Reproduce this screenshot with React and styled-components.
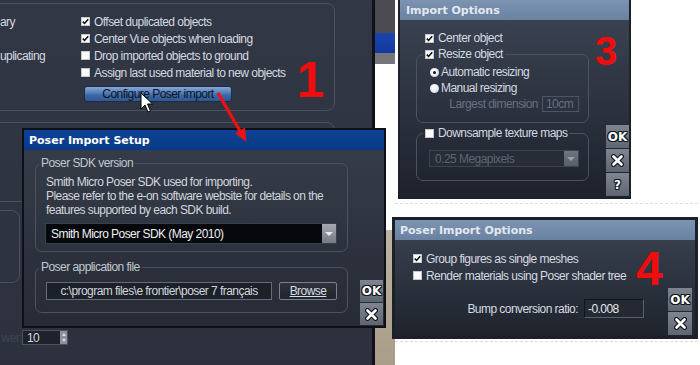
import React from 'react';
import styled, { createGlobalStyle } from 'styled-components';

const GlobalStyle = createGlobalStyle`
  html, body { margin: 0; padding: 0; background: #ffffff; }
  #root { width: 700px; height: 365px; overflow: hidden; }
`;

const uiFont = `"Liberation Sans", Arial, sans-serif`;
const titleFont = `"DejaVu Sans", Verdana, sans-serif`;

const Canvas = styled.div`
  display: flex;
  width: 700px;
  height: 365px;
  overflow: hidden;
  background: #ffffff;
  font-family: ${uiFont};
  font-size: 12px;
  letter-spacing: -0.55px;
  color: #d5d9e0;
`;

// left screenshot : preferences panel with the setup window over it
const VueShot = styled.div`
  position: relative;
  display: flex;
  width: 395px;
  height: 365px;
  flex-shrink: 0;
`;

const MainPanel = styled.div`
  width: 375px;
  height: 365px;
  box-sizing: border-box;
  padding-top: 3px;
  display: flex;
  flex-direction: column;
  background: linear-gradient(180deg, #313744 0%, #2c313d 100%);
  border-right: 3px solid #0f1319;
  overflow: hidden;
`;

const PrefsGroup = styled.div`
  flex-shrink: 0;
  margin-left: -10px;
  margin-top: ${p => p.$mt || 0}px;
  width: ${p => p.$w}px;
  height: ${p => p.$h}px;
  box-sizing: border-box;
  border: 1px solid #4a5161;
  border-radius: 8px;
`;

const PrefsGrid = styled(PrefsGroup)`
  display: grid;
  grid-template-columns: 80px 1fr;
  grid-template-rows: repeat(4, 17px) 21px;
  align-items: center;
  padding: 9px 0 0 10px;
`;

const CutLabel = styled.div`
  grid-column: 1;
  grid-row: ${p => p.$row};
  margin-left: -1px;
  white-space: nowrap;
`;

const Option = styled.label`
  grid-column: 2;
  grid-row: ${p => p.$row};
  display: flex;
  align-items: center;
  gap: 4px;
  white-space: nowrap;
`;

const ConfigureButton = styled.div`
  grid-column: 2;
  grid-row: 5;
  align-self: end;
  margin-left: 3px;
  width: 148px;
  height: 16px;
  box-sizing: border-box;
  display: flex;
  align-items: center;
  justify-content: center;
  border: 1px solid #1b2d4c;
  border-radius: 3px;
  background: linear-gradient(180deg, #86a8d4 0%, #5d86bd 35%, #3b66a3 62%, #30588f 100%);
  color: #0c1322;
  white-space: nowrap;
`;

const SpinRow = styled.div`
  display: flex;
  align-items: center;
  margin-top: 47px;
  height: 15px;
`;

const SpinLabel = styled.div`
  width: 22px;
  text-align: right;
  color: #3f4554;
  white-space: nowrap;
`;

const Spinbox = styled.div`
  width: 46px;
  height: 15px;
  box-sizing: border-box;
  display: flex;
  align-items: center;
  justify-content: space-between;
  padding-left: 4px;
  border: 1px solid #4c5261;
  background: #1e222a;
`;

const SpinArrows = styled.div`
  width: 7px;
  height: 13px;
  display: flex;
  flex-direction: column;
  align-items: center;
  justify-content: space-around;
  background: #8c929d;
  &::before, &::after {
    content: '';
    border-left: 2.5px solid transparent;
    border-right: 2.5px solid transparent;
  }
  &::before { border-bottom: 3px solid #d9dce1; }
  &::after { border-top: 3px solid #d9dce1; }
`;

const SideStrip = styled.div`
  width: 20px;
  display: flex;
  flex-direction: column;
`;

const StripBlock = styled.div`
  flex: ${p => (p.$h ? `0 0 ${p.$h}px` : '1')};
  background: ${p => p.$bg};
`;

// generic window
const Window = styled.div`
  box-sizing: border-box;
  flex-shrink: 0;
  width: ${p => p.$w}px;
  height: ${p => p.$h}px;
  display: flex;
  flex-direction: column;
  border: ${p => p.$border}px solid #0d1016;
`;

const SetupWindow = styled(Window)`
  position: absolute;
  left: 22px;
  top: 128px;
`;

const OptionsWindow = styled(Window)`
  position: relative;
  margin-left: ${p => p.$ml}px;
  border-color: #1b2029;
  border-top-width: ${p => p.$bt}px;
`;

const TitleBar = styled.div`
  height: 20px;
  flex-shrink: 0;
  display: flex;
  align-items: center;
  padding-left: ${p => p.$pl}px;
  font-family: ${titleFont};
  font-weight: bold;
  font-size: 11px;
  letter-spacing: 0;
  white-space: nowrap;
  color: ${p => (p.$tone === 'blue' ? '#ffffff' : '#e3e8ef')};
  background: ${p =>
    p.$tone === 'blue'
      ? 'linear-gradient(180deg, #0d4294 0%, #083a86 100%)'
      : 'linear-gradient(180deg, #7c93b1 0%, #6a82a2 100%)'};
`;

const WindowBody = styled.div`
  flex: 1;
  min-height: 0;
  display: flex;
  background: linear-gradient(180deg, ${p => p.$top} 0%, ${p => p.$bottom} 100%);
`;

const Content = styled.div`
  flex: 1;
  min-width: 0;
  display: flex;
  flex-direction: column;
  align-items: flex-start;
  padding: ${p => p.$pad};
`;

const ButtonStack = styled.div`
  display: flex;
  flex-direction: column;
  gap: 1px;
  align-self: flex-end;
  margin: 0 ${p => p.$mr}px 1px 0;
`;

const SideButton = styled.div`
  width: ${p => p.$w}px;
  height: ${p => p.$h}px;
  display: flex;
  align-items: center;
  justify-content: center;
  background: linear-gradient(180deg, #7e8490 0%, #5f6571 100%);
  font-family: ${titleFont};
  font-weight: bold;
  font-size: 12px;
  letter-spacing: 0;
  color: #ffffff;
  text-shadow: 1px 0 0 #151820, -1px 0 0 #151820, 0 1px 0 #151820, 0 -1px 0 #151820,
    1px 1px 0 #151820, -1px -1px 0 #151820, 1px -1px 0 #151820, -1px 1px 0 #151820;
`;

const Group = styled.fieldset`
  margin: ${p => p.$mt || 0}px 0 0 0;
  width: ${p => p.$w}px;
  min-width: 0;
  box-sizing: border-box;
  padding: ${p => p.$pad};
  border: 1px solid #4b5262;
  border-radius: 7px;
`;

/* legend sits after the fieldset's left padding, so the offset is often negative */
const Legend = styled.legend`
  padding: 0 2px;
  margin-left: ${p => p.$ml}px;
  line-height: 14px;
  color: ${p => (p.$dim ? '#c2c7cf' : '#d5d9e0')};
  white-space: nowrap;
`;

const LegendInner = styled.span`
  display: inline-flex;
  align-items: center;
  gap: 4px;
  height: 14px;
  vertical-align: top;
`;

const NoteText = styled.div`
  line-height: 14px;
  padding-left: 1px;
  color: #d2d6dd;
  white-space: nowrap;
`;

const Dropdown = styled.div`
  margin-top: ${p => p.$mt || 0}px;
  width: ${p => p.$w}px;
  height: ${p => p.$h}px;
  box-sizing: border-box;
  display: flex;
  align-items: stretch;
  border: 1px solid ${p => (p.$disabled ? '#3d4350' : '#3a404c')};
  background: ${p => (p.$disabled ? '#272c36' : '#06080b')};
  color: ${p => (p.$disabled ? '#5e6574' : '#eef0f3')};
  white-space: nowrap;
`;

const DropText = styled.span`
  flex: 1;
  display: flex;
  align-items: center;
  padding-left: 5px;
`;

const DropArrow = styled.span`
  width: 14px;
  display: flex;
  align-items: center;
  justify-content: center;
  background: ${p => (p.$disabled ? 'linear-gradient(180deg, #6f7581, #585e69)' : 'linear-gradient(180deg, #a3a8b1, #757b86)')};
  &::after {
    content: '';
    border-left: 4px solid transparent;
    border-right: 4px solid transparent;
    border-top: 4px solid ${p => (p.$disabled ? '#9ba0a9' : '#e6e8eb')};
  }
`;

const PathRow = styled.div`
  display: flex;
  gap: 7px;
`;

const PathField = styled.div`
  width: 226px;
  height: 18px;
  box-sizing: border-box;
  border: 1px solid #656b78;
  background: #1c2028;
  color: #d2d6dd;
  line-height: 16px;
  text-align: center;
  white-space: nowrap;
`;

const BrowseButton = styled.div`
  width: 58px;
  height: 18px;
  box-sizing: border-box;
  border: 1px solid #7a808b;
  border-radius: 2px;
  background: linear-gradient(180deg, #2e333d 0%, #20242c 100%);
  color: #d8dce3;
  line-height: 16px;
  text-align: center;
  text-decoration: underline;
`;

const OptionRow = styled.div`
  display: flex;
  align-items: center;
  gap: ${p => p.$gap || 4}px;
  height: ${p => p.$h || 14}px;
  padding-left: ${p => p.$pl || 0}px;
  margin-top: ${p => p.$mt || 0}px;
  white-space: nowrap;
`;

const EndRow = styled.div`
  align-self: stretch;
  display: flex;
  justify-content: flex-end;
  align-items: center;
  gap: ${p => p.$gap}px;
  height: ${p => p.$h}px;
  margin-top: ${p => p.$mt || 0}px;
  color: ${p => (p.$dim ? '#687080' : '#d5d9e0')};
  white-space: nowrap;
`;

const ValueField = styled.div`
  width: ${p => p.$w}px;
  height: ${p => p.$h}px;
  box-sizing: border-box;
  padding-left: 3px;
  display: flex;
  align-items: center;
  border: 1px solid ${p => (p.$dim ? '#4d5463' : '#121519')};
  border-bottom-color: ${p => (p.$dim ? '#4d5463' : '#5a606c')};
  border-right-color: ${p => (p.$dim ? '#4d5463' : '#5a606c')};
  background: ${p => (p.$dim ? 'transparent' : '#242933')};
  color: ${p => (p.$dim ? '#687080' : '#e3e6ea')};
`;

const CheckBox = styled.span`
  width: 9px;
  height: 9px;
  flex-shrink: 0;
  box-sizing: border-box;
  display: flex;
  align-items: center;
  justify-content: center;
  border: 1px solid #c4c8ce;
  background: #fbfbfc;
`;

const Radio = styled.span`
  width: 9px;
  height: 9px;
  flex-shrink: 0;
  border-radius: 50%;
  display: flex;
  align-items: center;
  justify-content: center;
  background: radial-gradient(circle at 40% 35%, #ffffff 0%, #e6e8ec 60%, #b9bec6 100%);
  &::after {
    content: '';
    width: 3px;
    height: 3px;
    border-radius: 50%;
    background: ${p => (p.$on ? '#111' : 'transparent')};
  }
`;

const Ruler = styled.div`
  height: 0;
  margin: ${p => p.$m};
  border-top: 1px dashed #dedede;
`;

const RightColumn = styled.div`
  display: flex;
  flex-direction: column;
`;

const Callout = styled.span`
  position: absolute;
  left: ${p => p.$x}px;
  top: ${p => p.$y}px;
  font-family: "Liberation Sans", Arial, sans-serif;
  font-weight: bold;
  font-size: ${p => p.$size}px;
  letter-spacing: 0;
  line-height: 1;
  color: #f20d0d;
  pointer-events: none;
`;

const Overlay = styled.svg`
  position: absolute;
  left: ${p => p.$x}px;
  top: ${p => p.$y}px;
  overflow: visible;
  pointer-events: none;
`;

function Check({ on }) {
  return (
    <CheckBox>
      {on && (
        <svg width="7" height="7" viewBox="0 0 7 7">
          <path d="M0.8 3.6 L2.6 5.4 L6.2 1.2" fill="none" stroke="#111" strokeWidth="1.6" />
        </svg>
      )}
    </CheckBox>
  );
}

function CloseGlyph() {
  return (
    <svg width="13" height="13" viewBox="0 0 13 13">
      <path d="M2.5 2.5 L10.5 10.5 M10.5 2.5 L2.5 10.5" stroke="#151820" strokeWidth="5" strokeLinecap="round" />
      <path d="M2.5 2.5 L10.5 10.5 M10.5 2.5 L2.5 10.5" stroke="#ffffff" strokeWidth="2.6" strokeLinecap="round" />
    </svg>
  );
}

function ConfirmButtons({ w, h, mr, help }) {
  return (
    <ButtonStack $mr={mr}>
      <SideButton $w={w} $h={h}>OK</SideButton>
      <SideButton $w={w} $h={h}><CloseGlyph /></SideButton>
      {help && <SideButton $w={w} $h={h}>?</SideButton>}
    </ButtonStack>
  );
}

function PreferencesShot() {
  return (
    <VueShot>
      <MainPanel>
        <PrefsGrid $w={345} $h={108}>
          <CutLabel $row={1}>ary</CutLabel>
          <Option $row={1}><Check on />Offset duplicated objects</Option>
          <Option $row={2}><Check on />Center Vue objects when loading</Option>
          <CutLabel $row={3}>uplicating</CutLabel>
          <Option $row={3}><Check />Drop imported objects to ground</Option>
          <Option $row={4}><Check />Assign last used material to new objects</Option>
          <ConfigureButton>Configure Poser import</ConfigureButton>
        </PrefsGrid>
        <PrefsGroup $mt={11} $w={345} $h={80} />
        <PrefsGroup $mt={8} $w={30} $h={73} />
        <SpinRow>
          <SpinLabel>wer:</SpinLabel>
          <Spinbox>
            10
            <SpinArrows />
          </Spinbox>
        </SpinRow>
      </MainPanel>
      <SideStrip>
        <StripBlock $h={33} $bg="#4b4a50" />
        <StripBlock $h={20} $bg="linear-gradient(180deg, #1a45ad, #1338a0)" />
        <StripBlock $h={11} $bg="#76767a" />
        <StripBlock $bg="#ffffff" />
        <StripBlock $h={135} $bg="linear-gradient(180deg, #bdb3a2, #a99d89)" />
      </SideStrip>

      <SetupWindow $w={364} $h={200} $border={2}>
        <TitleBar $tone="blue" $pl={5}>Poser Import Setup</TitleBar>
        <WindowBody $top="#353b48" $bottom="#262b35">
          <Content $pad="6px 12px 0 11px">
            <Group $w={313} $pad="5px 10px 7px 9px">
              <Legend $ml={-6} $dim>Poser SDK version</Legend>
              <NoteText>Smith Micro Poser SDK used for importing.</NoteText>
              <NoteText>Please refer to the e-on software website for details on the</NoteText>
              <NoteText>features supported by each SDK build.</NoteText>
              <Dropdown $mt={6} $w={292} $h={21}>
                <DropText>Smith Micro Poser SDK (May 2010)</DropText>
                <DropArrow />
              </Dropdown>
            </Group>
            <Group $mt={8} $w={313} $pad="8px 10px 12px 10px">
              <Legend $ml={-7} $dim>Poser application file</Legend>
              <PathRow>
                <PathField>c:\program files\e frontier\poser 7 français</PathField>
                <BrowseButton>Browse</BrowseButton>
              </PathRow>
            </Group>
          </Content>
          <ConfirmButtons w={23} h={22} mr={1} />
        </WindowBody>
      </SetupWindow>

      <Overlay $x={140} $y={92} width="13" height="21" viewBox="0 0 13 21">
        <path d="M1 1 L1 17 L5 13 L8 20 L10.5 19 L7.5 12 L12.5 12 Z" fill="#ffffff" stroke="#000" strokeWidth="1" strokeLinejoin="round" />
      </Overlay>
      <Overlay $x={0} $y={0} width="395" height="365" viewBox="0 0 395 365">
        <line x1="218" y1="93" x2="240" y2="131" stroke="#ee1111" strokeWidth="3.2" />
        <polygon points="246.5,142 245,127.5 235,133.3" fill="#ee1111" />
      </Overlay>
      <Callout $x={297} $y={55} $size={50}>1</Callout>
    </VueShot>
  );
}

function ImportOptions() {
  return (
    <OptionsWindow $w={233} $h={199} $border={2} $bt={0} $ml={3}>
      <TitleBar $tone="steel" $pl={6}>Import Options</TitleBar>
      <WindowBody $top="#3a4150" $bottom="#1d222c">
        <Content $pad="11px 0 0 16px">
          <OptionRow $pl={9}><Check on />Center object</OptionRow>
          <Group $mt={2} $w={173} $pad="3px 9px 10px 13px">
            <Legend $ml={-7}>
              <LegendInner><Check on />Resize object</LegendInner>
            </Legend>
            <OptionRow $h={16} $gap={2}><Radio $on />Automatic resizing</OptionRow>
            <OptionRow $h={16} $gap={2}><Radio />Manual resizing</OptionRow>
            <EndRow $h={16} $gap={4} $dim>
              Largest dimension
              <ValueField $w={37} $h={16} $dim>10cm</ValueField>
            </EndRow>
          </Group>
          <Group $mt={3} $w={173} $pad="10px 9px 13px 12px">
            <Legend $ml={-6}>
              <LegendInner><Check />Downsample texture maps</LegendInner>
            </Legend>
            <Dropdown $w={150} $h={17} $disabled>
              <DropText>0.25 Megapixels</DropText>
              <DropArrow $disabled />
            </Dropdown>
          </Group>
        </Content>
        <ConfirmButtons w={23} h={23} mr={0} help />
      </WindowBody>
      <Callout $x={195} $y={31} $size={40}>3</Callout>
    </OptionsWindow>
  );
}

function PoserImportOptions() {
  return (
    <OptionsWindow $w={306} $h={122} $border={3} $bt={3} $ml={-3}>
      <TitleBar $tone="steel" $pl={5}>Poser Import Options</TitleBar>
      <WindowBody $top="#373e4c" $bottom="#1e232c">
        <Content $pad="10px 24px 0 18px">
          <OptionRow $h={17}><Check on />Group figures as single meshes</OptionRow>
          <OptionRow $h={17}><Check />Render materials using Poser shader tree</OptionRow>
          <EndRow $h={19} $gap={6} $mt={15}>
            Bump conversion ratio:
            <ValueField $w={60} $h={19}>-0.008</ValueField>
          </EndRow>
        </Content>
        <ConfirmButtons w={24} h={23} mr={3} />
      </WindowBody>
      <Callout $x={241} $y={25} $size={48}>4</Callout>
    </OptionsWindow>
  );
}

export default function App() {
  return (
    <Canvas>
      <GlobalStyle />
      <PreferencesShot />
      <RightColumn>
        <ImportOptions />
        <Ruler $m="4px 0 13px -5px" />
        <PoserImportOptions />
        <Ruler $m="2px 0 0 -5px" />
      </RightColumn>
    </Canvas>
  );
}
